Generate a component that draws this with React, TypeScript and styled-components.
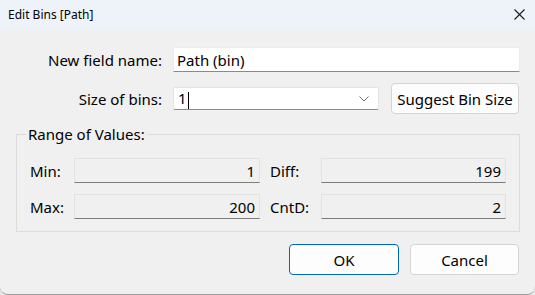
import React from "react";
import styled, { createGlobalStyle } from "styled-components";

const GlobalStyle = createGlobalStyle`
  html, body {
    margin: 0;
    padding: 0;
    background: #e8e8e8;
  }
  body {
    font-family: "Segoe UI", "Noto Sans", "Open Sans", sans-serif;
    color: #000;
  }
`;

const Window = styled.div`
  width: 535px;
  height: 295px;
  box-sizing: border-box;
  background: #f0f0f0;
  border-bottom: 1px solid #9c9c9c;
  border-radius: 0 0 8px 8px;
  display: flex;
  flex-direction: column;
  overflow: hidden;
`;

const TitleBar = styled.div`
  height: 29px;
  flex: none;
  background: #eef3f9;
  display: flex;
  align-items: center;
  justify-content: space-between;
  padding: 0 8px;
  font-size: 12px;
`;

const CloseGlyph = styled.svg`
  width: 11px;
  height: 11px;
  margin-right: 2px;
`;

const Body = styled.div`
  flex: 1;
  display: flex;
  flex-direction: column;
  padding: 18px 15px 0 16px;
  font-size: 15px;
`;

const FormGrid = styled.div`
  display: grid;
  grid-template-columns: 146px 1fr;
  column-gap: 11px;
  row-gap: 11px;
  align-items: center;
`;

const Label = styled.label`
  text-align: right;
  white-space: nowrap;
`;

const TextBox = styled.div`
  height: 25px;
  box-sizing: border-box;
  background: #fff;
  border: 1px solid #ececec;
  border-bottom-color: #8a8a8a;
  display: flex;
  align-items: center;
  padding-left: 3px;
`;

const SizeRow = styled.div`
  display: flex;
  align-items: center;
  gap: 12px;
  padding-right: 1px;
`;

const ComboBox = styled.div`
  width: 206px;
  height: 23px;
  box-sizing: border-box;
  background: #fff;
  border: 1px solid #e3e3e3;
  border-bottom-color: #8c8c8c;
  border-radius: 2px;
  display: flex;
  align-items: center;
  justify-content: space-between;
  padding: 0 9px 0 4px;
`;

const Caret = styled.span`
  display: inline-block;
  width: 1px;
  height: 17px;
  background: #000;
  vertical-align: middle;
  margin-left: 1px;
`;

const Button = styled.button<{ $primary?: boolean; $width: number }>`
  width: ${(p) => p.$width}px;
  height: 31px;
  box-sizing: border-box;
  background: #fdfdfd;
  border: 1px solid ${(p) => (p.$primary ? "#0067c0" : "#d4d4d4")};
  border-radius: 4px;
  font: inherit;
  font-size: 15px;
  color: #000;
  padding: 0;
`;

const Group = styled.fieldset`
  margin: 10px 0 0;
  padding: 14px 13px 12px;
  border: 1px solid #dcdcdc;
  min-width: 0;
`;

const Legend = styled.legend`
  margin-left: -4px;
  padding: 0 2px;
  line-height: 20px;
`;

const RangeGrid = styled.div`
  display: grid;
  grid-template-columns: 44px 186px 61px 185px;
  row-gap: 11px;
  align-items: center;
`;

const RangeLabel = styled.span<{ $indent?: boolean }>`
  padding-left: ${(p) => (p.$indent ? 10 : 0)}px;
`;

const ValueBox = styled.div`
  height: 25px;
  box-sizing: border-box;
  background: #f0f0f0;
  border: 1px solid #e2e2e2;
  border-bottom-color: #7c7c7c;
  display: flex;
  align-items: center;
  justify-content: flex-end;
  padding-right: 4px;
`;

const Footer = styled.div`
  display: flex;
  justify-content: flex-end;
  gap: 11px;
  margin-top: 12px;
  padding-right: 1px;
`;

const ranges = [
  { label: "Min:", value: "1", otherLabel: "Diff:", otherValue: "199" },
  { label: "Max:", value: "200", otherLabel: "CntD:", otherValue: "2" },
];

export default function App() {
  return (
    <>
      <GlobalStyle />
      <Window>
        <TitleBar>
          <span>Edit Bins [Path]</span>
          <CloseGlyph viewBox="0 0 11 11">
            <path d="M0.5 0.5 L10.5 10.5 M10.5 0.5 L0.5 10.5" stroke="#1a1a1a" strokeWidth="1.1" fill="none" />
          </CloseGlyph>
        </TitleBar>
        <Body>
          <FormGrid>
            <Label>New field name:</Label>
            <TextBox>Path (bin)</TextBox>
            <Label>Size of bins:</Label>
            <SizeRow>
              <ComboBox>
                <span>
                  1<Caret />
                </span>
                <svg width="10" height="6" viewBox="0 0 10 6">
                  <path d="M0.5 0.5 L5 5 L9.5 0.5" stroke="#707070" strokeWidth="1" fill="none" />
                </svg>
              </ComboBox>
              <Button $width={128}>Suggest Bin Size</Button>
            </SizeRow>
          </FormGrid>
          <Group>
            <Legend>Range of Values:</Legend>
            <RangeGrid>
              {ranges.map((r) => (
                <React.Fragment key={r.label}>
                  <RangeLabel>{r.label}</RangeLabel>
                  <ValueBox>{r.value}</ValueBox>
                  <RangeLabel $indent>{r.otherLabel}</RangeLabel>
                  <ValueBox>{r.otherValue}</ValueBox>
                </React.Fragment>
              ))}
            </RangeGrid>
          </Group>
          <Footer>
            <Button $primary $width={110}>OK</Button>
            <Button $width={109}>Cancel</Button>
          </Footer>
        </Body>
      </Window>
    </>
  );
}
